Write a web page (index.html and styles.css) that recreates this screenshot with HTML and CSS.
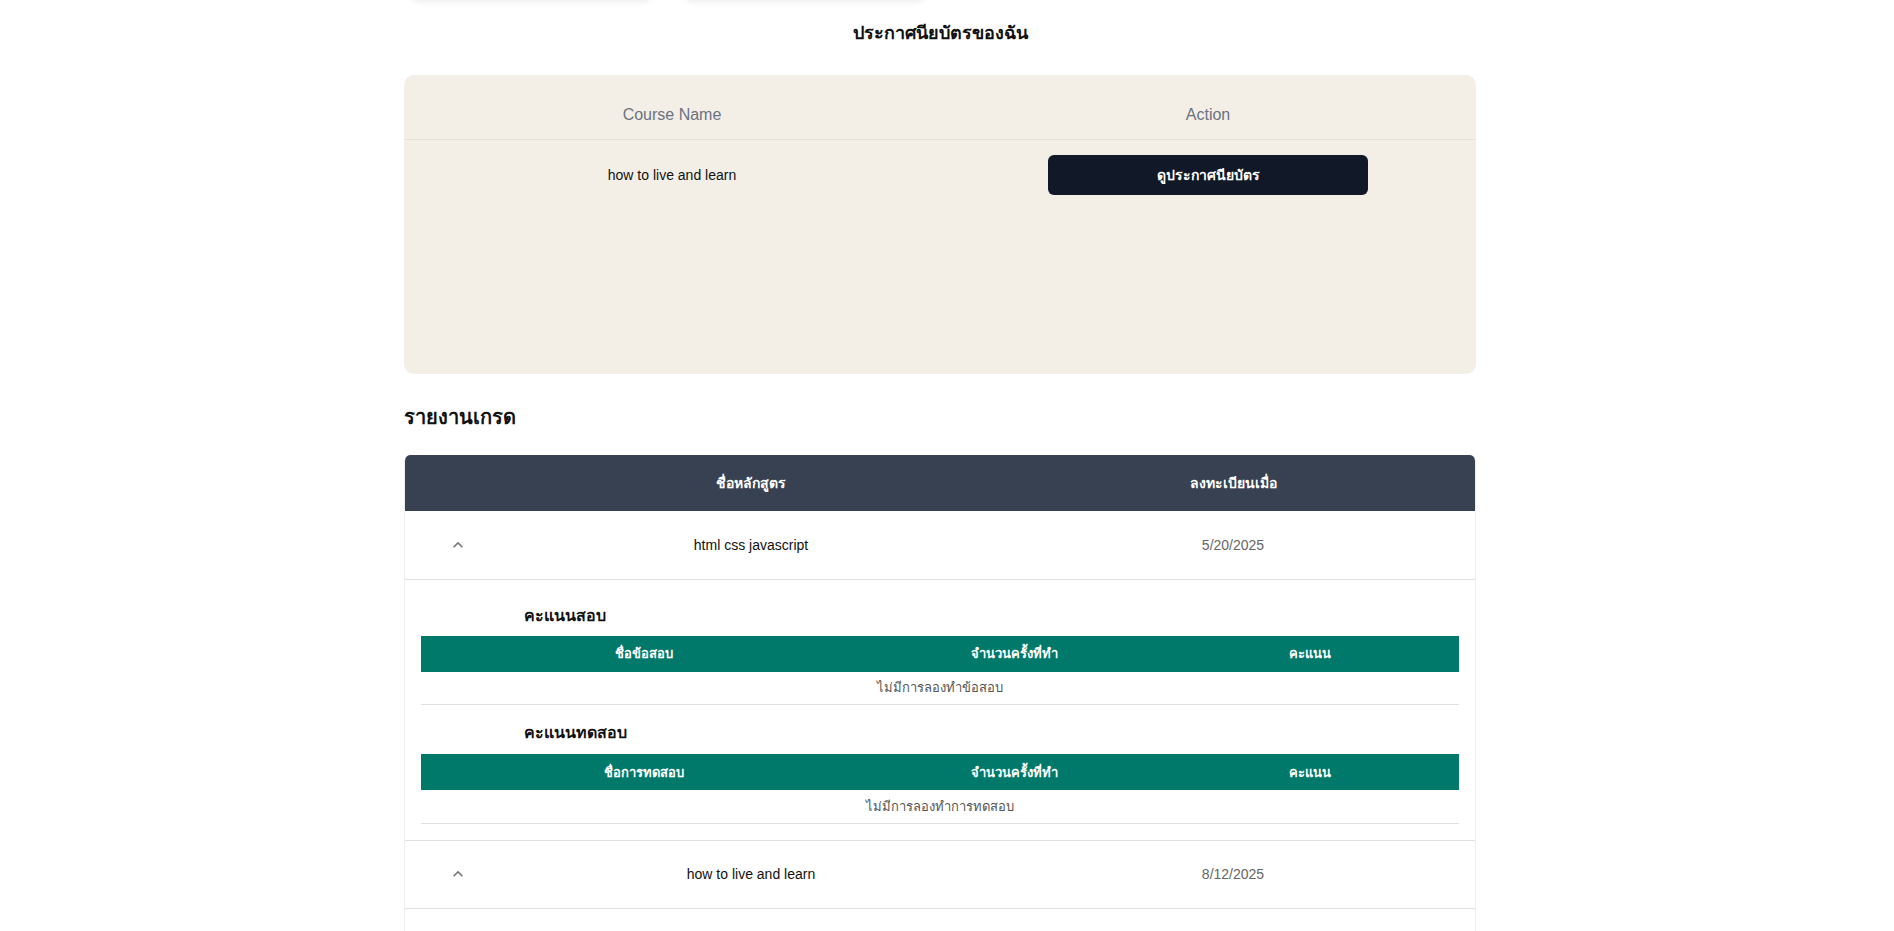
FILE: index.html
```html
<!DOCTYPE html>
<html lang="th">
<head>
<meta charset="utf-8">
<title>ประกาศนียบัตรของฉัน</title>
<link rel="stylesheet" href="styles.css">
</head>
<body>
<div class="page">
  <div class="tabs">
    <div class="tab"></div>
    <div class="tab"></div>
  </div>

  <h2 class="page-title">ประกาศนียบัตรของฉัน</h2>

  <div class="cert-card">
    <table class="cert-table">
      <thead>
        <tr><th>Course Name</th><th>Action</th></tr>
      </thead>
      <tbody>
        <tr>
          <td>how to live and learn</td>
          <td><button class="cert-btn">ดูประกาศนียบัตร</button></td>
        </tr>
      </tbody>
    </table>
  </div>

  <h3 class="section-title">รายงานเกรด</h3>

  <div class="grade-wrap">
    <table class="grade-table">
      <colgroup>
        <col class="c-toggle"><col class="c-name"><col class="c-date">
      </colgroup>
      <thead>
        <tr><th></th><th>ชื่อหลักสูตร</th><th>ลงทะเบียนเมื่อ</th></tr>
      </thead>
      <tbody>
        <tr class="course-row">
          <td class="toggle"><svg class="chev" viewBox="0 0 24 24"><path d="M7.41 15.41 12 10.83l4.59 4.58L18 14l-6-6-6 6z"/></svg></td>
          <td class="name">html css javascript</td>
          <td class="date">5/20/2025</td>
        </tr>
        <tr class="detail-row">
          <td colspan="3" class="detail">
            <div class="sub-title">คะแนนสอบ</div>
            <table class="sub-table">
              <colgroup><col class="s1"><col class="s2"><col class="s3"></colgroup>
              <thead><tr><th>ชื่อข้อสอบ</th><th>จำนวนครั้งที่ทำ</th><th>คะแนน</th></tr></thead>
              <tbody><tr><td colspan="3">ไม่มีการลองทำข้อสอบ</td></tr></tbody>
            </table>
            <div class="sub-title second">คะแนนทดสอบ</div>
            <table class="sub-table">
              <colgroup><col class="s1"><col class="s2"><col class="s3"></colgroup>
              <thead><tr><th>ชื่อการทดสอบ</th><th>จำนวนครั้งที่ทำ</th><th>คะแนน</th></tr></thead>
              <tbody><tr><td colspan="3">ไม่มีการลองทำการทดสอบ</td></tr></tbody>
            </table>
          </td>
        </tr>
        <tr class="course-row">
          <td class="toggle"><svg class="chev" viewBox="0 0 24 24"><path d="M7.41 15.41 12 10.83l4.59 4.58L18 14l-6-6-6 6z"/></svg></td>
          <td class="name">how to live and learn</td>
          <td class="date">8/12/2025</td>
        </tr>
        <tr class="detail-row">
          <td colspan="3" class="detail detail-empty"></td>
        </tr>
      </tbody>
    </table>
  </div>
</div>
</body>
</html>
```

FILE: styles.css
```css
* { box-sizing: border-box; }

html, body {
  margin: 0;
  padding: 0;
  background: #ffffff;
  font-family: "Liberation Sans", Arial, "Noto Sans", sans-serif;
  color: #111111;
}

.page {
  width: 1072px;
  margin-left: 404px;
}

.tabs {
  display: flex;
  gap: 32px;
  height: 40px;
  margin-top: -40px;
  padding-left: 7px;
}

.tab {
  width: 241px;
  height: 40px;
  background: #ffffff;
  border-radius: 8px;
  box-shadow: 0 2px 6px rgba(0, 0, 0, 0.07);
}

.page-title {
  margin: 0;
  height: 75px;
  padding-top: 21px;
  font-size: 18px;
  line-height: 24px;
  font-weight: 700;
  text-align: center;
  color: #111111;
}

.cert-card {
  height: 299px;
  background: #f3efe7;
  border-radius: 10px;
  padding-top: 16px;
}

.cert-table {
  width: 100%;
  border-collapse: collapse;
  table-layout: fixed;
}

.cert-table th {
  height: 48px;
  padding: 0;
  font-size: 16px;
  font-weight: 400;
  color: #6b7280;
  text-align: center;
  border-bottom: 1px solid #e8e3da;
}

.cert-table td {
  height: 72px;
  padding: 0;
  font-size: 14px;
  color: #111111;
  text-align: center;
}

.cert-btn {
  width: 320px;
  height: 40px;
  border: none;
  border-radius: 6px;
  background: #111827;
  color: #ffffff;
  font-family: inherit;
  font-size: 14px;
  font-weight: 700;
}

.section-title {
  margin: 29px 0 24px;
  font-size: 20px;
  line-height: 28px;
  font-weight: 700;
  color: #111111;
}

.grade-wrap {
  border-left: 1px solid #eeeeee;
  border-right: 1px solid #eeeeee;
  border-radius: 6px 6px 0 0;
  overflow: hidden;
}

.grade-table {
  width: 100%;
  border-collapse: collapse;
  table-layout: fixed;
}

.c-toggle { width: 106px; }
.c-name { width: 480px; }
.c-date { width: auto; }

.grade-table > thead th {
  height: 56px;
  padding: 0;
  background: #374151;
  color: #ffffff;
  font-size: 14px;
  font-weight: 700;
  text-align: center;
}

.course-row td {
  height: 68px;
  padding: 0;
  border-bottom: 1px solid #e0e0e0;
  font-size: 14px;
  text-align: center;
}

.toggle { line-height: 0; }

.chev {
  width: 20px;
  height: 20px;
  fill: #757575;
}

.name { color: #111111; }
.date { color: #666666; }

.detail {
  padding: 24px 16px 16px;
  border-bottom: 1px solid #e0e0e0;
}

.detail-empty {
  height: 120px;
}

.sub-title {
  margin: 0 0 8px 103px;
  font-size: 16px;
  line-height: 24px;
  font-weight: 700;
  color: #111111;
}

.sub-title.second {
  margin-top: 16px;
  margin-bottom: 9px;
}

.sub-table {
  width: 100%;
  border-collapse: collapse;
  table-layout: fixed;
}

.s1 { width: 446px; }
.s2 { width: 294px; }
.s3 { width: auto; }

.sub-table th {
  height: 36px;
  padding: 0;
  background: #00796b;
  color: #ffffff;
  font-size: 13px;
  font-weight: 700;
  text-align: center;
}

.sub-table td {
  height: 33px;
  padding: 0;
  font-size: 13px;
  color: #555555;
  text-align: center;
  border-bottom: 1px solid #e0e0e0;
}
```
